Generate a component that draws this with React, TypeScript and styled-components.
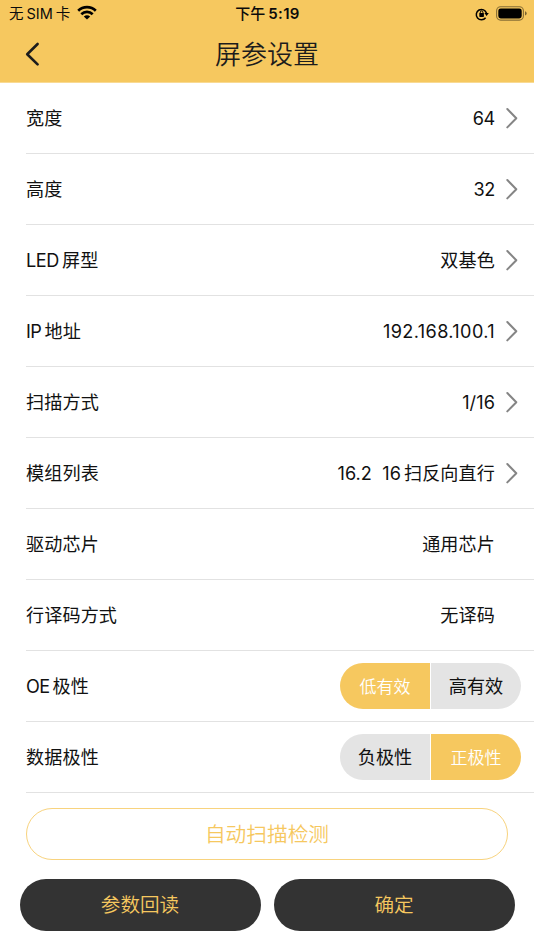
import React from 'react';
import styled, { createGlobalStyle } from 'styled-components';

const GOLD = '#f6c85f';

const GlobalStyle = createGlobalStyle`
  * { box-sizing: border-box; }
  body {
    margin: 0;
    background: #fff;
    color: #111;
    font-family: Inter, "Noto Sans CJK SC", sans-serif;
  }
  button { font-family: inherit; margin: 0; padding: 0; cursor: pointer; }
`;

const Screen = styled.main`
  width: 534px;
  height: 950px;
  display: flex;
  flex-direction: column;
  overflow: hidden;
  background: #fff;
`;

const Header = styled.header`
  height: 83px;
  flex: none;
  background: linear-gradient(${GOLD} 82px, #f9da93 82px);
`;

const StatusBar = styled.div`
  height: 27px;
  display: grid;
  grid-template-columns: 1fr auto 1fr;
  align-items: center;
  padding: 0 6px 0 9px;
  font-size: 15px;
  line-height: 27px;
  color: #0b0b0b;
`;

const Carrier = styled.div`
  display: flex;
  align-items: center;
  gap: 3px;
  font-size: 14.5px;
  svg { margin-left: 4px; margin-top: -2px; }
`;

const Clock = styled.div`
  display: flex;
  gap: 3px;
  margin-right: 2px;
  font-weight: 500;
  b { font-weight: 600; letter-spacing: 0.3px; }
`;

const StatusIcons = styled.div`
  display: flex;
  justify-content: flex-end;
  align-items: center;
  gap: 7px;
`;

const NavBar = styled.div`
  height: 54px;
  display: grid;
  grid-template-columns: 60px 1fr 60px;
  align-items: center;
`;

const BackButton = styled.button`
  display: flex;
  width: 24px;
  height: 28px;
  margin: 1px 0 0 22px;
  border: 0;
  background: none;
`;

const Title = styled.h1`
  margin: 1px 0 0;
  text-align: center;
  font-size: 26px;
  line-height: 50px;
  font-weight: 350;
  color: #1c1c1c;
`;

const List = styled.section`
  flex: none;
  padding-left: 26px;
`;

const Row = styled.div<{ $wide?: boolean }>`
  height: 71px;
  display: flex;
  align-items: center;
  justify-content: space-between;
  padding-right: ${(p) => (p.$wide ? 13 : 16)}px;
  border-bottom: 1px solid #e2e2e2;
  font-size: 18.1px;
  letter-spacing: 0.12px;
`;

const Mixed = styled.span`
  display: flex;
  align-items: baseline;
  gap: 3px;
  white-space: pre;
  line-height: 28px;
`;

const Latin = styled.span<{ $track?: number }>`
  letter-spacing: ${(p) => p.$track ?? 0}px;
`;

const Value = styled.div`
  display: flex;
  align-items: center;
  gap: 11px;
`;

const ArrowSlot = styled.span`
  display: flex;
  width: 12px;
  height: 22px;
`;

const Segmented = styled.div`
  display: flex;
  width: 181px;
  height: 46px;
  gap: 1px;
  border-radius: 23px;
  overflow: hidden;
`;

const Segment = styled.button<{ $active: boolean }>`
  flex: 1;
  padding-bottom: 2px;
  border: 0;
  background: ${(p) => (p.$active ? GOLD : '#e4e4e4')};
  color: ${(p) => (p.$active ? '#fff' : '#111')};
  font-size: ${(p) => (p.$active ? 17 : 18.2)}px;
  font-weight: ${(p) => (p.$active ? 350 : 400)};
`;

const Actions = styled.footer`
  padding: 15px 19.5px 0;
  display: grid;
  grid-template-columns: 241px 241px;
  column-gap: 13px;
  row-gap: 19px;
`;

const Action = styled.button`
  height: 52px;
  padding-bottom: 3px;
  border-radius: 26px;
  border: 0;
  background: #333;
  color: ${GOLD};
  font-size: 19.6px;
  font-weight: 350;
`;

const DetectButton = styled(Action)`
  grid-column: 1 / -1;
  margin: 0 6.5px;
  border: 1.4px solid #f8d37e;
  background: #fff;
  font-size: 20.7px;
`;

const WifiIcon = () => (
  <svg width="20" height="15" viewBox="0 0 20 15" fill="none" stroke="#000" strokeWidth="2.7">
    <path d="M1.2 5.7C6.1 1 13.9 1 18.8 5.7" />
    <path d="M4.3 9.2C7.5 6.2 12.5 6.2 15.7 9.2" />
    <path d="M10 14.6 6.8 11.5Q10 8.9 13.2 11.5Z" fill="#000" stroke="none" />
  </svg>
);

const RotationLockIcon = () => (
  <svg width="14" height="14" viewBox="0 0 14 14" fill="none" stroke="#000">
    <path d="M10.6 10.8A5.2 5.2 0 1 1 11.5 6.2" strokeWidth="1.5" />
    <path d="M9.4 6H13.8L11.6 9Z" fill="#000" stroke="none" />
    <rect x="4.3" y="6" width="4.6" height="3.9" rx=".6" fill="#000" stroke="none" />
    <path d="M5.3 6.5V5.2a1.3 1.3 0 0 1 2.6 0v1.3" strokeWidth="1" />
  </svg>
);

const BatteryIcon = () => (
  <svg width="32" height="15" viewBox="0 0 32 15">
    <rect x=".6" y=".7" width="26.8" height="13.4" rx="4" fill="none" stroke="#000" strokeOpacity=".45" strokeWidth="1.1" />
    <rect x="2.3" y="2.4" width="23.4" height="10" rx="2.4" fill="#000" />
    <path d="M29 5.2Q30.7 5.8 30.7 7.4T29 9.6Z" fill="#000" fillOpacity=".5" />
  </svg>
);

const BackIcon = () => (
  <svg width="24" height="28" viewBox="0 0 24 28" fill="none" stroke="#1c1c1c" strokeWidth="2.6" strokeLinecap="round" strokeLinejoin="round">
    <path d="M15.6 3 5.2 13.2 15.6 23.4" />
  </svg>
);

const ArrowIcon = () => (
  <svg width="12" height="22" viewBox="0 0 12 22" fill="none" stroke="#858585" strokeWidth="2" strokeLinecap="round" strokeLinejoin="round">
    <path d="M1.3 2 10.3 11.2 1.3 20.4" />
  </svg>
);

type Entry = { label: React.ReactNode; value: React.ReactNode; arrow?: boolean };

const entries: Entry[] = [
  { label: '宽度', value: <Latin $track={-0.3}>64</Latin>, arrow: true },
  { label: '高度', value: <Latin $track={-0.3}>32</Latin>, arrow: true },
  { label: <><Latin $track={-0.4}>LED</Latin><span>屏型</span></>, value: '双基色', arrow: true },
  { label: <><Latin $track={-0.5}>IP</Latin><span>地址</span></>, value: <Latin $track={0.38}>192.168.100.1</Latin>, arrow: true },
  { label: '扫描方式', value: <Latin $track={0.1}>1/16</Latin>, arrow: true },
  { label: '模组列表', value: <><Latin $track={0.05}>16.2{'  '}16</Latin><span>扫反向直行</span></>, arrow: true },
  { label: '驱动芯片', value: '通用芯片' },
  { label: '行译码方式', value: '无译码' },
];

type Polarity = { label: React.ReactNode; options: string[]; initial: number };

const polarities: Polarity[] = [
  { label: <><Latin $track={-0.6}>OE</Latin><span>极性</span></>, options: ['低有效', '高有效'], initial: 0 },
  { label: '数据极性', options: ['负极性', '正极性'], initial: 1 },
];

function PolarityRow({ label, options, initial }: Polarity) {
  const [selected, setSelected] = React.useState(initial);
  return (
    <Row $wide>
      <Mixed>{label}</Mixed>
      <Segmented>
        {options.map((option, i) => (
          <Segment key={option} $active={i === selected} onClick={() => setSelected(i)}>
            {option}
          </Segment>
        ))}
      </Segmented>
    </Row>
  );
}

export default function App() {
  return (
    <Screen>
      <GlobalStyle />
      <Header>
        <StatusBar>
          <Carrier>
            <span>无</span><span>SIM</span><span>卡</span>
            <WifiIcon />
          </Carrier>
          <Clock><span>下午</span><b>5:19</b></Clock>
          <StatusIcons>
            <RotationLockIcon />
            <BatteryIcon />
          </StatusIcons>
        </StatusBar>
        <NavBar>
          <BackButton aria-label="返回"><BackIcon /></BackButton>
          <Title>屏参设置</Title>
        </NavBar>
      </Header>
      <List>
        {entries.map((entry, i) => (
          <Row key={i}>
            <Mixed>{entry.label}</Mixed>
            <Value>
              <Mixed>{entry.value}</Mixed>
              <ArrowSlot>{entry.arrow && <ArrowIcon />}</ArrowSlot>
            </Value>
          </Row>
        ))}
        {polarities.map((polarity, i) => (
          <PolarityRow key={i} {...polarity} />
        ))}
      </List>
      <Actions>
        <DetectButton>自动扫描检测</DetectButton>
        <Action>参数回读</Action>
        <Action>确定</Action>
      </Actions>
    </Screen>
  );
}
